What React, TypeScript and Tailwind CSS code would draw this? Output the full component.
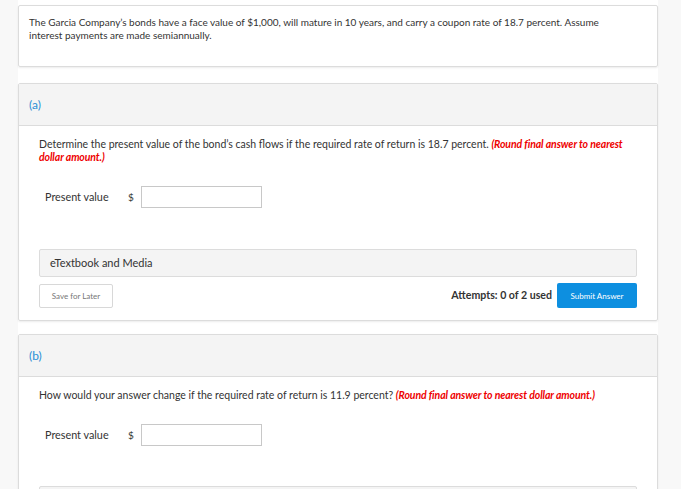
export default function App() {
  return (
    <div className="min-h-[489px] bg-[#f8f8f8] font-['Lato','Open_Sans',sans-serif] text-[#333]">
      <div className="mx-[18px] w-[640px] bg-white pt-[5px] pb-10">
        {/* Intro */}
        <div className="h-[62px] rounded-[2px] border border-[#dcdcdc] pl-[10px] pr-[30px] pt-[10px] shadow-[0_1px_2px_rgba(0,0,0,0.08)]">
          <p className="text-[10px] leading-[13px] text-[#333]">
            The Garcia Company’s bonds have a face value of $1,000, will mature in 10 years, and carry a coupon rate of 18.7 percent. Assume interest payments are made semiannually.
          </p>
        </div>

        {/* Part (a) */}
        <div className="mt-[16px] rounded-[2px] border border-[#dcdcdc] shadow-[0_1px_2px_rgba(0,0,0,0.08)]">
          <div className="flex h-[42px] items-center border-b border-[#dcdcdc] bg-[#f4f4f4] px-[10px]">
            <span className="text-[12px] text-[#2a8fd6]">(a)</span>
          </div>
          <div className="pl-[20px] pr-[30px] pt-[12px] pb-[12px]">
            <p className="text-[10.5px] leading-[13px] text-[#333]">
              Determine the present value of the bond’s cash flows if the required rate of return is 18.7 percent.{' '}
              <span className="font-bold italic tracking-[-0.1px] text-[#ee0000]">(Round final answer to nearest dollar amount.)</span>
            </p>
            <div className="mt-[22px] flex items-center pl-[6px]">
              <span className="w-[83px] text-[10.8px] text-[#333]">Present value</span>
              <span className="w-[13px] text-[10px] text-[#333]">$</span>
              <div className="h-[22px] w-[121px] border border-[#c8c8c8] bg-white" />
            </div>
            <div className="mr-[-10px] mt-[41px] flex h-[28px] items-center rounded-[2px] border border-[#dcdcdc] bg-[#f4f4f4] px-[10px]">
              <span className="text-[11px] text-[#333]">eTextbook and Media</span>
            </div>
            <div className="mr-[-10px] mt-[6px] flex items-center justify-between">
              <div className="flex h-[24px] w-[74px] items-center justify-center rounded-[2px] border border-[#d8d8d8] bg-white">
                <span className="text-[8px] text-[#777]">Save for Later</span>
              </div>
              <div className="flex items-center gap-[5px]">
                <span className="text-[10.6px] font-bold text-[#333]">Attempts: 0 of 2 used</span>
                <div className="flex h-[25px] w-[80px] items-center justify-center rounded-[2px] bg-[#0d8fe0]">
                  <span className="text-[8px] text-white">Submit Answer</span>
                </div>
              </div>
            </div>
          </div>
        </div>

        {/* Part (b) */}
        <div className="mt-[13px] rounded-[2px] border border-[#dcdcdc] shadow-[0_1px_2px_rgba(0,0,0,0.08)]">
          <div className="flex h-[42px] items-center border-b border-[#dcdcdc] bg-[#f4f4f4] px-[10px]">
            <span className="text-[12px] text-[#2a8fd6]">(b)</span>
          </div>
          <div className="px-[20px] pt-[12px] pb-[12px]">
            <p className="text-[10.5px] leading-[13px] text-[#333]">
              How would your answer change if the required rate of return is 11.9 percent?{' '}
              <span className="font-bold italic tracking-[-0.1px] text-[#ee0000]">(Round final answer to nearest dollar amount.)</span>
            </p>
            <div className="mt-[22px] flex items-center pl-[6px]">
              <span className="w-[83px] text-[10.8px] text-[#333]">Present value</span>
              <span className="w-[13px] text-[10px] text-[#333]">$</span>
              <div className="h-[22px] w-[121px] border border-[#c8c8c8] bg-white" />
            </div>
            <div className="mt-[40px] flex h-[28px] items-center rounded-[2px] border border-[#dcdcdc] bg-[#f4f4f4] px-[10px]">
              <span className="text-[11px] text-[#333]">eTextbook and Media</span>
            </div>
          </div>
        </div>
      </div>
    </div>
  );
}
